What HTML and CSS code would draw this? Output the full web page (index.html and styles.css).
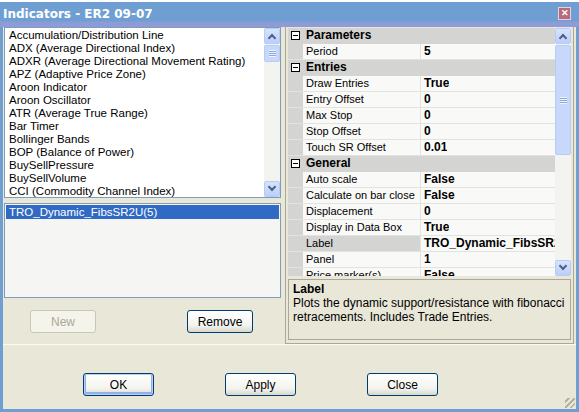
FILE: index.html
```html
<!DOCTYPE html>
<html lang='en'>
<head>
  <meta charset='UTF-8'>
  <title>Indicators - ER2 09-07</title>
  <link rel="stylesheet" href="styles.css">
</head>
<body>

<div class='window'>
  <div class='titlebar'>
    <span class='title'>Indicators - ER2 09-07</span>
    <span class='close-x'>&#x2715;</span>
  </div>

  <div class='client'>
    <div class='top-area'>
      <div class='left-col'>
        <div class='listbox available'>
          <div class='list-items'>
            <div class='item'>Accumulation/Distribution Line</div>
            <div class='item'>ADX (Average Directional Index)</div>
            <div class='item'>ADXR (Average Directional Movement Rating)</div>
            <div class='item'>APZ (Adaptive Price Zone)</div>
            <div class='item'>Aroon Indicator</div>
            <div class='item'>Aroon Oscillator</div>
            <div class='item'>ATR (Average True Range)</div>
            <div class='item'>Bar Timer</div>
            <div class='item'>Bollinger Bands</div>
            <div class='item'>BOP (Balance of Power)</div>
            <div class='item'>BuySellPressure</div>
            <div class='item'>BuySellVolume</div>
            <div class='item'>CCI (Commodity Channel Index)</div>
          </div>
          <div class='vscroll'>
            <div class='sb-btn up'><span class='chev'></span></div>
            <div class='sb-track'>
              <div class='sb-thumb small'><span class='grip'></span></div>
            </div>
            <div class='sb-btn down'><span class='chev'></span></div>
          </div>
        </div>

        <div class='listbox applied'>
          <div class='item selected'>TRO_Dynamic_FibsSR2U(5)</div>
        </div>

        <div class='left-buttons'>
          <button class='xp-btn' disabled>New</button>
          <button class='xp-btn'>Remove</button>
        </div>
      </div>

      <div class='right-col'>
        <div class='propgrid'>
          <div class='rows'>
            <div class='row cat'><span class='gutter'><span class='minus'></span></span><span class='cat-name'>Parameters</span></div>
            <div class='row'><span class='gutter'></span><span class='pname'>Period</span><span class='pval'>5</span></div>
            <div class='row cat'><span class='gutter'><span class='minus'></span></span><span class='cat-name'>Entries</span></div>
            <div class='row'><span class='gutter'></span><span class='pname'>Draw Entries</span><span class='pval'>True</span></div>
            <div class='row'><span class='gutter'></span><span class='pname'>Entry Offset</span><span class='pval'>0</span></div>
            <div class='row'><span class='gutter'></span><span class='pname'>Max Stop</span><span class='pval'>0</span></div>
            <div class='row'><span class='gutter'></span><span class='pname'>Stop Offset</span><span class='pval'>0</span></div>
            <div class='row'><span class='gutter'></span><span class='pname'>Touch SR Offset</span><span class='pval'>0.01</span></div>
            <div class='row cat'><span class='gutter'><span class='minus'></span></span><span class='cat-name'>General</span></div>
            <div class='row'><span class='gutter'></span><span class='pname'>Auto scale</span><span class='pval'>False</span></div>
            <div class='row'><span class='gutter'></span><span class='pname'>Calculate on bar close</span><span class='pval'>False</span></div>
            <div class='row'><span class='gutter'></span><span class='pname'>Displacement</span><span class='pval'>0</span></div>
            <div class='row'><span class='gutter'></span><span class='pname'>Display in Data Box</span><span class='pval'>True</span></div>
            <div class='row active'><span class='gutter'></span><span class='pname'>Label</span><span class='pval'>TRO_Dynamic_FibsSR2U</span></div>
            <div class='row'><span class='gutter'></span><span class='pname'>Panel</span><span class='pval'>1</span></div>
            <div class='row'><span class='gutter'></span><span class='pname'>Price marker(s)</span><span class='pval'>False</span></div>
          </div>
          <div class='vscroll'>
            <div class='sb-btn up'><span class='chev'></span></div>
            <div class='sb-track'>
              <div class='sb-thumb big'><span class='grip'></span></div>
            </div>
            <div class='sb-btn down'><span class='chev'></span></div>
          </div>
        </div>

        <div class='description'>
          <div class='desc-title'>Label</div>
          <div class='desc-text'>Plots the dynamic support/resistance with fibonacci retracements. Includes Trade Entries.</div>
        </div>
      </div>
    </div>

    <div class='bottom-buttons'>
      <button class='xp-btn wide focused'>OK</button>
      <button class='xp-btn wide'>Apply</button>
      <button class='xp-btn wide'>Close</button>
    </div>
    <div class='grip-corner'></div>
  </div>
</div>

</body>
</html>
```

FILE: styles.css
```css
* {
  margin: 0;
  padding: 0;
  box-sizing: border-box;
}

body {
  font-family: 'Liberation Sans', Arial, sans-serif;
  font-size: 11px;
  background-color: #fff;
  width: 579px;
  height: 412px;
  overflow: hidden;
  padding-top: 2px;
}

.window {
  width: 579px;
  height: 410px;
  background-color: #6f9fd2;
  padding: 0 3px 3px 3px;
  display: flex;
  flex-direction: column;
}

/* Title bar */
.titlebar {
  height: 25px;
  display: flex;
  align-items: center;
  justify-content: space-between;
  background: linear-gradient(#6f9fd2 0, #6f9fd2 19px, #8a9cd8 20px, #8f9bd6 24px);
  margin: 0 -3px;
  padding: 0 8px 2px 3px;
}

.title {
  color: #fff;
  font-family: 'DejaVu Sans', sans-serif;
  font-weight: bold;
  font-size: 12px;
}

.close-x {
  width: 13px;
  height: 13px;
  background-color: #b86a7c;
  border: 1px solid #e8d0d8;
  color: #fff;
  font-size: 9px;
  font-weight: bold;
  line-height: 11px;
  text-align: center;
}

.client {
  flex: 1;
  background-color: #e8e7d8;
  position: relative;
  display: flex;
  flex-direction: column;
}

.top-area {
  display: flex;
  height: 318px;
  padding-left: 1px;
  border-bottom: 1px solid #fbfbf6;
}

/* Left column */
.left-col {
  width: 277px;
  display: flex;
  flex-direction: column;
}

.listbox {
  background-color: #fff;
  border: 1px solid #7f9db9;
  display: flex;
}

.listbox.available {
  height: 171px;
}

.list-items {
  flex: 1;
  padding-top: 1px;
}

.item {
  height: 13px;
  line-height: 13px;
  padding-left: 4px;
  font-size: 11.5px;
  color: #000;
  white-space: nowrap;
}

.listbox.applied {
  margin-top: 5px;
  height: 95px;
  background-color: #f5f5f3;
  padding: 1px;
  display: block;
}

.item.selected {
  background-color: #316ac5;
  color: #fff;
  height: 14px;
  line-height: 14px;
  padding-left: 3px;
}

.left-buttons {
  display: flex;
  padding: 12px 0 0 26px;
  gap: 91px;
}

/* XP style buttons */
.xp-btn {
  font-family: 'Liberation Sans', Arial, sans-serif;
  font-size: 12px;
  width: 66px;
  height: 23px;
  border: 1px solid #003c74;
  border-radius: 3px;
  background: linear-gradient(#ffffff, #f3f3ee 70%, #d8d6cb);
  color: #000;
}

.xp-btn:disabled {
  border-color: #c9c7ba;
  background: #f5f4ea;
  color: #aca899;
}

.xp-btn.wide {
  width: 71px;
}

.xp-btn.focused {
  box-shadow: inset 0 0 0 1px #b9d1f7, inset 0 -1px 0 2px #94aee8;
}

/* Right column */
.right-col {
  width: 289px;
  margin-left: 4px;
  border: 1px solid #aca899;
  border-top: none;
  padding: 1px 2px 3px 2px;
  display: flex;
  flex-direction: column;
}

.propgrid {
  height: 250px;
  display: flex;
  background-color: #fafaf8;
  overflow: hidden;
}

.rows {
  flex: 1;
  overflow: hidden;
}

.row {
  height: 16px;
  display: flex;
  border-bottom: 1px solid #e2e2de;
  background-color: #f9f9f7;
}

.gutter {
  width: 15px;
  flex: none;
  background-color: #d4d4d2;
  display: flex;
  align-items: center;
  justify-content: center;
}

.minus {
  width: 9px;
  height: 9px;
  border: 1px solid #000;
  background-color: #fff;
  position: relative;
}

.minus::after {
  content: '';
  position: absolute;
  left: 1px;
  top: 3px;
  width: 5px;
  height: 1px;
  background-color: #000;
}

.row.cat {
  background-color: #d4d4d2;
  border-bottom-color: #d4d4d2;
}

.cat-name {
  font-weight: bold;
  font-size: 12px;
  line-height: 15px;
  padding-left: 3px;
}

.pname {
  width: 118px;
  flex: none;
  padding-left: 3px;
  line-height: 15px;
  border-right: 1px solid #e2e2de;
  color: #000;
  white-space: nowrap;
  overflow: hidden;
}

.row.active .pname {
  background-color: #d4d4d2;
}

.pval {
  padding-left: 3px;
  font-weight: bold;
  font-size: 12px;
  line-height: 15px;
  white-space: nowrap;
  overflow: hidden;
}

/* Scrollbars */
.vscroll {
  width: 16px;
  flex: none;
  display: flex;
  flex-direction: column;
  background-color: #f3f3ef;
}

.sb-btn {
  height: 16px;
  border: 1px solid #b6cbf5;
  border-radius: 2px;
  background: linear-gradient(#d6e3fd, #bccffa);
  display: flex;
  align-items: center;
  justify-content: center;
}

.chev {
  width: 6px;
  height: 6px;
  border-left: 2px solid #4d6185;
  border-top: 2px solid #4d6185;
}

.up .chev {
  transform: translateY(2px) rotate(45deg);
}

.down .chev {
  transform: translateY(-2px) rotate(225deg);
}

.sb-track {
  flex: 1;
  padding-top: 1px;
}

.sb-thumb {
  border: 1px solid #b6cbf5;
  border-radius: 2px;
  background-color: #c8d8fb;
  display: flex;
  align-items: center;
  justify-content: center;
}

.sb-thumb.small {
  height: 17px;
}

.sb-thumb.big {
  height: 110px;
}

.grip {
  width: 7px;
  height: 7px;
  background: repeating-linear-gradient(#eef3fe 0, #eef3fe 1px, #8ca6dc 1px, #8ca6dc 2px);
}

/* Description */
.description {
  margin-top: 3px;
  height: 61px;
  border: 1px solid #aca899;
  padding: 2px 4px;
}

.desc-title {
  font-weight: bold;
  font-size: 12px;
  line-height: 14px;
}

.desc-text {
  font-size: 12px;
  line-height: 14px;
}

/* Bottom */
.bottom-buttons {
  display: flex;
  padding: 28px 0 0 80px;
  gap: 71px;
}

.grip-corner {
  position: absolute;
  right: 1px;
  bottom: 1px;
  width: 10px;
  height: 10px;
  background: repeating-linear-gradient(135deg, transparent 0, transparent 2px, #b5b29f 2px, #b5b29f 4px);
}
```
